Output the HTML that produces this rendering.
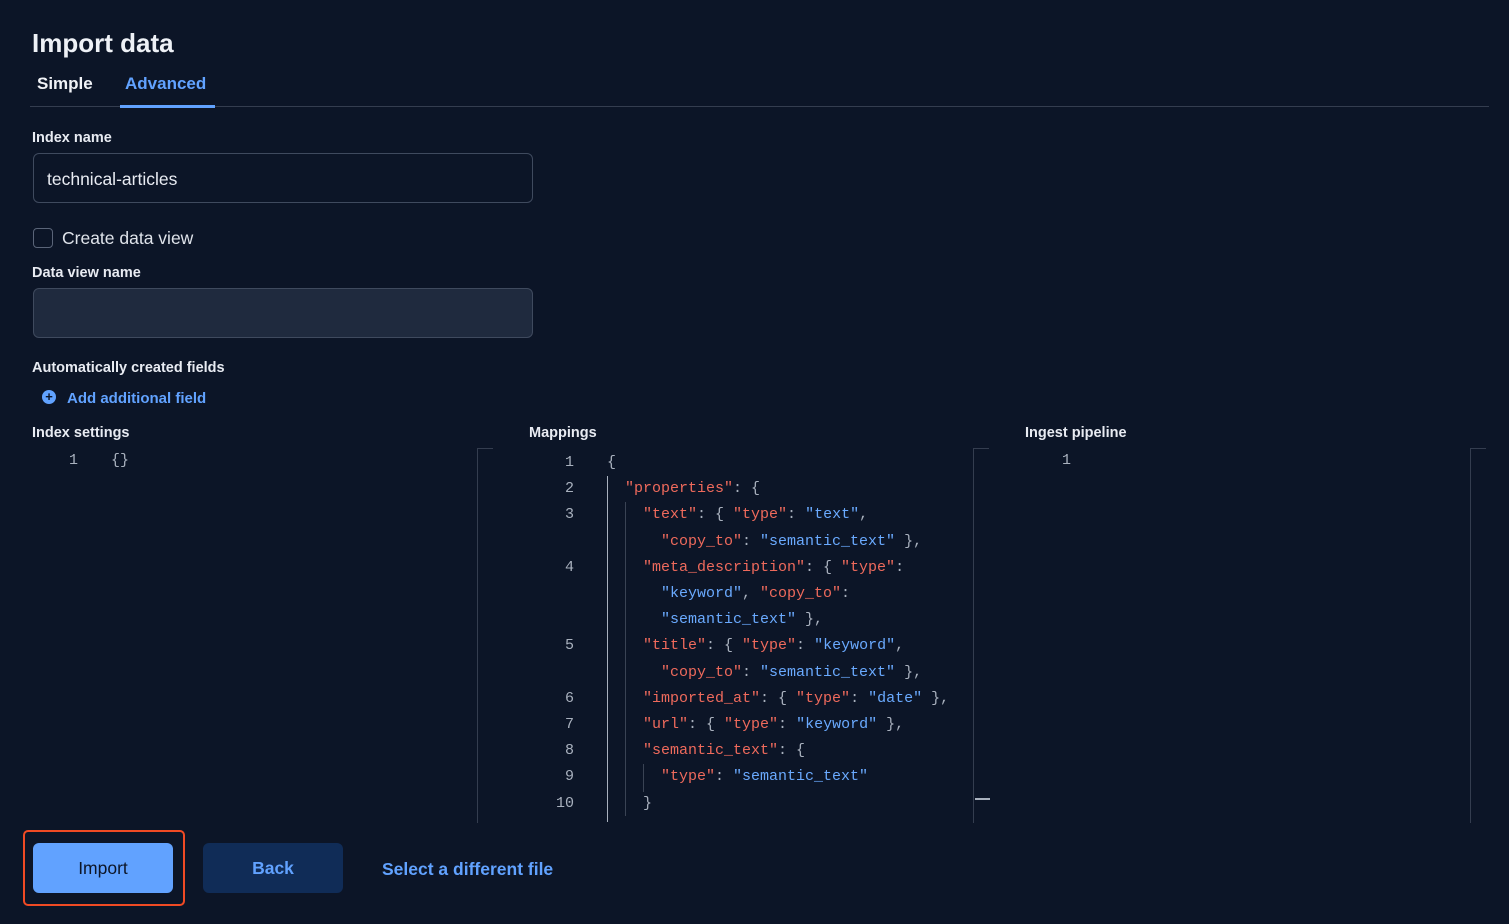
<!DOCTYPE html>
<html><head><meta charset="utf-8"><style>
*{margin:0;padding:0;box-sizing:border-box}
body{width:1509px;height:924px;background:#0c1527;font-family:"Liberation Sans",sans-serif;color:#e1e6ef;position:relative;overflow:hidden}
.a{position:absolute;white-space:nowrap}
.lbl{font-size:14.5px;font-weight:bold;color:#e8ebf2}
.mono{font-family:"Liberation Mono",monospace;font-size:15px}
.r{color:#ef6a5c}.b{color:#6aaaff}.p{color:#a9b1be}
.ln{color:#a9b1be;text-align:right;width:30px}
.vl{position:absolute;width:1px;background:#343d4f}
</style></head><body>
<div class="a" style="left:32px;top:28px;font-size:26px;font-weight:bold;color:#eef1f6">Import data</div>
<div class="a" style="left:37px;top:74px;font-size:17px;font-weight:bold;color:#f0f2f6">Simple</div>
<div class="a" style="left:125px;top:74px;font-size:17px;font-weight:bold;color:#61a2ff">Advanced</div>
<div class="a" style="left:30px;top:106px;width:1459px;height:1px;background:#343d4f"></div>
<div class="a" style="left:120px;top:105px;width:95px;height:3px;background:#61a2ff"></div>

<div class="a lbl" style="left:32px;top:130px">Index name</div>
<div class="a" style="left:33px;top:153px;width:500px;height:50px;border:1px solid #3f4a5e;border-radius:6px"></div>
<div class="a" style="left:47px;top:169px;font-size:17.5px;color:#e8ebf2">technical-articles</div>

<div class="a" style="left:33px;top:228px;width:20px;height:20px;border:1px solid #5a6478;border-radius:4px"></div>
<div class="a" style="left:62px;top:228px;font-size:17.5px;color:#dfe3ea">Create data view</div>
<div class="a lbl" style="left:32px;top:265px">Data view name</div>
<div class="a" style="left:33px;top:288px;width:500px;height:50px;border:1px solid #3f4a5e;border-radius:6px;background:#1f2a3e"></div>

<div class="a lbl" style="left:32px;top:360px">Automatically created fields</div>
<div class="a" style="left:42px;top:390px;width:14px;height:14px;border-radius:50%;background:#61a2ff;color:#0c1527;font-size:13px;font-weight:bold;line-height:14px;text-align:center">+</div>
<div class="a" style="left:67px;top:390px;font-size:15px;font-weight:bold;color:#61a2ff">Add additional field</div>

<div class="a lbl" style="left:32px;top:425px">Index settings</div>
<div class="a lbl" style="left:529px;top:425px">Mappings</div>
<div class="a lbl" style="left:1025px;top:425px">Ingest pipeline</div>

<div class="vl" style="left:477px;top:448px;height:375px"></div><div class="a" style="left:477px;top:448px;width:16px;height:1px;background:#343d4f"></div>
<div class="vl" style="left:973px;top:448px;height:375px"></div><div class="a" style="left:973px;top:448px;width:16px;height:1px;background:#343d4f"></div>
<div class="a" style="left:975px;top:798px;width:15px;height:2px;background:#a9b1be"></div>
<div class="vl" style="left:1470px;top:448px;height:375px"></div><div class="a" style="left:1470px;top:448px;width:16px;height:1px;background:#343d4f"></div>

<div class="a mono ln" style="left:48px;top:452px">1</div>
<div class="a mono p" style="left:111px;top:452px">{}</div>
<div class="a mono ln" style="left:1041px;top:452px">1</div>

<div class="vl" style="left:607px;top:476px;height:346px;background:#a9b1be"></div>
<div class="vl" style="left:625px;top:502px;height:314px;background:#3a4354"></div>
<div class="vl" style="left:643px;top:764px;height:28px;background:#3a4354"></div>

<div class="a mono" style="left:544px;top:450px;line-height:26.2px">
<div style="display:flex"><div class="ln">1</div><div style="padding-left:33px" class="p">{</div></div>
<div style="display:flex"><div class="ln">2</div><div style="padding-left:51px"><span class="r">"properties"</span><span class="p">: {</span></div></div>
<div style="display:flex"><div class="ln">3</div><div style="padding-left:69px"><span class="r">"text"</span><span class="p">: { </span><span class="r">"type"</span><span class="p">: </span><span class="b">"text"</span><span class="p">,</span></div></div>
<div style="display:flex"><div class="ln"></div><div style="padding-left:87px"><span class="r">"copy_to"</span><span class="p">: </span><span class="b">"semantic_text"</span><span class="p"> },</span></div></div>
<div style="display:flex"><div class="ln">4</div><div style="padding-left:69px"><span class="r">"meta_description"</span><span class="p">: { </span><span class="r">"type"</span><span class="p">:</span></div></div>
<div style="display:flex"><div class="ln"></div><div style="padding-left:87px"><span class="b">"keyword"</span><span class="p">, </span><span class="r">"copy_to"</span><span class="p">:</span></div></div>
<div style="display:flex"><div class="ln"></div><div style="padding-left:87px"><span class="b">"semantic_text"</span><span class="p"> },</span></div></div>
<div style="display:flex"><div class="ln">5</div><div style="padding-left:69px"><span class="r">"title"</span><span class="p">: { </span><span class="r">"type"</span><span class="p">: </span><span class="b">"keyword"</span><span class="p">,</span></div></div>
<div style="display:flex"><div class="ln"></div><div style="padding-left:87px"><span class="r">"copy_to"</span><span class="p">: </span><span class="b">"semantic_text"</span><span class="p"> },</span></div></div>
<div style="display:flex"><div class="ln">6</div><div style="padding-left:69px"><span class="r">"imported_at"</span><span class="p">: { </span><span class="r">"type"</span><span class="p">: </span><span class="b">"date"</span><span class="p"> },</span></div></div>
<div style="display:flex"><div class="ln">7</div><div style="padding-left:69px"><span class="r">"url"</span><span class="p">: { </span><span class="r">"type"</span><span class="p">: </span><span class="b">"keyword"</span><span class="p"> },</span></div></div>
<div style="display:flex"><div class="ln">8</div><div style="padding-left:69px"><span class="r">"semantic_text"</span><span class="p">: {</span></div></div>
<div style="display:flex"><div class="ln">9</div><div style="padding-left:87px"><span class="r">"type"</span><span class="p">: </span><span class="b">"semantic_text"</span></div></div>
<div style="display:flex"><div class="ln">10</div><div style="padding-left:69px" class="p">}</div></div>
</div>

<div class="a" style="left:0;top:823px;width:1509px;height:101px;background:#0c1527"></div>
<div class="a" style="left:23px;top:830px;width:162px;height:76px;border:2.5px solid #f04a24;border-radius:5px"></div>
<div class="a" style="left:33px;top:843px;width:140px;height:50px;background:#61a2ff;border-radius:6px;color:#0c1527;font-size:17.5px;line-height:50px;text-align:center">Import</div>
<div class="a" style="left:203px;top:843px;width:140px;height:50px;background:#102c57;border-radius:6px;color:#61a2ff;font-size:17.5px;font-weight:bold;line-height:50px;text-align:center">Back</div>
<div class="a" style="left:382px;top:859px;font-size:17.5px;font-weight:bold;color:#61a2ff">Select a different file</div>
</body></html>
